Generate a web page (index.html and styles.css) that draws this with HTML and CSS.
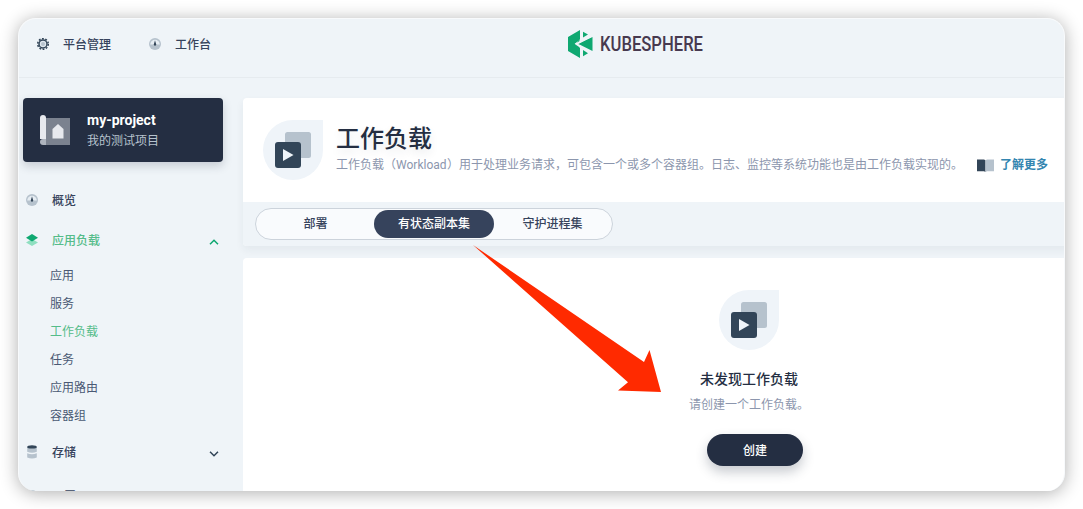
FILE: index.html
```html
<!DOCTYPE html>
<html lang="zh-CN">
<head>
<meta charset="utf-8">
<title>KubeSphere</title>
<link rel="stylesheet" href="styles.css">
</head>
<body>
<svg class="defs" width="0" height="0">
  <symbol id="gauge" viewBox="0 0 12 12"><circle cx="6" cy="6" r="6" fill="#b6c2cd"/><path d="M1.2 6.6a4.8 4.8 0 0 1 9.6 0z" fill="#e6edf3"/><path d="M6 2.2 7.3 6.8 6 8 4.7 6.8z" fill="#324558"/></symbol>
  <symbol id="workload" viewBox="0 0 60 60"><path d="M30 0h30v30a30 30 0 1 1-30-30z" fill="#eff4f9"/><rect x="22" y="12" width="26" height="26" rx="2.5" fill="#b6c2cd"/><rect x="12" y="22" width="26" height="26" rx="3" fill="#324558"/><path d="M20 29v12l10.500-6z" fill="#eff4f9"/></symbol>
</svg>
<div class="window">
  <header class="topbar">
    <nav class="topnav">
      <a class="toplink"><svg class="ic12" viewBox="0 0 12 12"><circle cx="6" cy="6" r="5.300" fill="none" stroke="#324558" stroke-width="1.500" stroke-dasharray="1.850 1.480"/><circle cx="6" cy="6" r="4" fill="#dfe7ee" stroke="#324558" stroke-width="1.500"/><circle cx="6" cy="6" r="2" fill="#b6c2cd"/></svg><span>平台管理</span></a>
      <a class="toplink"><svg class="ic12"><use href="#gauge"/></svg><span>工作台</span></a>
    </nav>
    <svg class="logo" viewBox="0 0 136 28">
      <path d="M12 0v9L7 13.800l5 4.200V28L0 21V7z" fill="#0fa871"/>
      <path d="M15 1.700v5.900L20 4.500zM24.500 7v14L10 13.800z" fill="#0fa871"/>
      <path d="M15 20v6.300l5-3z" fill="#0fa871"/>
      <path d="M11.500 8.500 8 13.800l3.500 5" fill="#0fa871"/>
      <path d="M25 5.200 8.500 13.800 15.500 19" fill="none" stroke="#eff4f8" stroke-width="2"/>
      <text x="32" y="21" textLength="103" lengthAdjust="spacingAndGlyphs">KUBESPHERE</text>
    </svg>
  </header>
  <div class="body">
    <aside class="side">
      <div class="project">
        <svg class="project-icon" viewBox="0 0 32 32"><path d="M4 4h27v27H4z" fill="#7b828f"/><path d="M1 4a3 3 0 0 1 6 0v21H1z" fill="#e7e9ee"/><path d="M7 25H4a3 3 0 0 0 0 6h3z" fill="#aeb4be"/><path d="M13.500 24.500V15L19 10l5.500 5v9.500z" fill="#e7e9ee"/></svg>
        <div><div class="project-name">my-project</div><div class="project-desc">我的测试项目</div></div>
      </div>
      <nav class="menu">
        <a class="item"><svg class="ic12"><use href="#gauge"/></svg><span>概览</span></a>
        <a class="item active"><svg class="ic12" viewBox="0 0 12 12"><path d="M0 8.500 6 5l6 3.500L6 12z" fill="#8fdfc0"/><path d="M0 3.700 6 0l6 3.700-6 3.700z" fill="#0fa871"/></svg><span>应用负载</span><svg class="chev" viewBox="0 0 10 6"><path d="M1 5.200 5 1.200l4 4" stroke="#0fa871"/></svg></a>
        <div class="submenu">
          <a>应用</a><a>服务</a><a class="active">工作负载</a><a>任务</a><a>应用路由</a><a>容器组</a>
        </div>
        <a class="item"><svg class="ic12 disk" viewBox="0 0 12 14"><path d="M1.200 2h9.600v4.800Q6 8.600 1.200 6.800z" fill="#b6c2cd"/><path d="M1.200 8.300q4.800 1.800 9.600 0v4.200q-4.800 2-9.600 0z" fill="#b6c2cd"/><ellipse cx="6" cy="1.900" rx="4.800" ry="1.700" fill="#324558"/></svg><span>存储</span><svg class="chev" viewBox="0 0 10 6"><path d="m1 .8 4 4 4-4" stroke="#324558"/></svg></a>
        <a class="item last"><svg class="ic12" viewBox="0 0 12 12"><circle cx="6" cy="6" r="6" fill="#b6c2cd"/></svg><span>配置</span></a>
      </nav>
    </aside>
    <main class="main">
      <section class="banner">
        <div class="intro">
          <svg class="ic60"><use href="#workload"/></svg>
          <div>
            <h1>工作负载</h1>
            <p>工作负载（<span class="latin">Workload</span>）用于处理业务请求，可包含一个或多个容器组。日志、监控等系统功能也是由工作负载实现的。<a class="more"><svg class="book" viewBox="0 0 17 13"><path d="M0 .5h7l1.500.7V13L7 12.200H0z" fill="#324558"/><path d="M17 .5h-7l-1.500.7V13l1.500-.8h7z" fill="#b6c2cd"/></svg>了解更多</a></p>
          </div>
        </div>
        <div class="tabbar"><div class="tabs"><span>部署</span><span class="on">有状态副本集</span><span>守护进程集</span></div></div>
      </section>
      <section class="empty">
        <svg class="ic60"><use href="#workload"/></svg>
        <h2>未发现工作负载</h2>
        <p>请创建一个工作负载。</p>
        <button class="create">创建</button>
      </section>
    </main>
  </div>
</div>
<svg class="arrow" viewBox="0 0 190 149"><path d="M0 0 171 117l5.500-12L188 147l-43-1.500 10-8.200z" fill="#ff2a00"/></svg>
</body>
</html>
```
FILE: styles.css
```css
* { box-sizing: border-box; }
body {
  margin: 0; padding: 18px; height: 509px; overflow: hidden; background: #fff;
  font: 12px/20px Roboto, "Noto Sans CJK SC", sans-serif; color: #36435c;
}
h1, h2, p { margin: 0; }
svg { display: block; flex: none; }
.defs { position: absolute; }
.window {
  width: 1047px; height: 473px; border-radius: 18px; overflow: hidden;
  background: #eff4f8; box-shadow: 0 2px 18px rgba(0, 0, 0, .32);
  border: 1px solid #f8fafc; border-bottom: 0;
}
.topbar { display: flex; height: 59px; border-bottom: 1px solid #e6ebef; }
.topnav { display: flex; gap: 38px; width: 549px; padding: 15px 0 0 18px; }
.toplink { display: flex; align-items: center; gap: 14px; height: 20px; font-weight: 500; }
.toplink span { padding-top: 2px; }
.ic12 { width: 12px; height: 12px; }
.logo { width: 136px; height: 28px; margin-top: 11px; }
.logo text { font: 500 20px Roboto, sans-serif; fill: #47394f; }
.body { display: flex; padding-top: 20px; }
.side { flex: none; width: 224px; padding-left: 4px; }
.project {
  display: flex; align-items: center; gap: 15px; width: 200px; height: 64px; padding-left: 16px;
  border-radius: 4px; background: #242e42; box-shadow: 0 4px 10px rgba(36, 46, 66, .2); color: #fff;
}
.project-icon { width: 32px; height: 32px; margin-right: 1px; }
.project-name { font-size: 14px; font-weight: 700; }
.project-desc { color: #b6c2cd; padding-top: 1px; margin-bottom: -1px; }
.menu { padding-top: 18px; }
.item { display: flex; align-items: center; height: 40px; padding: 0 4px 0 3px; font-weight: 500; width: 200px; }
.item span { margin-left: 14px; flex: 1; padding-top: 2px; }
.item .chev { margin-top: 4px; }
.disk { height: 14px; }
.last { margin-top: 4px; }
.chev { width: 10px; height: 6px; }
.chev path { fill: none; stroke-width: 1.5; }
.submenu { display: flex; flex-direction: column; padding: 2px 0 2px 27px; color: #4a5974; }
.submenu a { height: 28px; line-height: 28px; }
.menu .active { color: #55bc8a; }
.main { width: 1012px; flex: none; }
.banner { border-radius: 4px; overflow: hidden; box-shadow: 0 4px 8px rgba(36, 46, 66, .06); background: #fff; }
.intro { display: flex; gap: 13px; height: 104px; padding: 22px 0 0 20px; }
.ic60 { width: 60px; height: 60px; }
h1 { margin-top: 3px; font-size: 24px; line-height: 32px; font-weight: 500; color: #242e42; text-shadow: 0 4px 8px rgba(36, 46, 66, .1); }
p { color: #8c96ad; }
.intro p { display: flex; white-space: nowrap; }
.latin { width: 51px; font-size: 12px; }
.more { display: flex; align-items: center; gap: 6px; margin-left: 14px; color: #3385b0; font-weight: 700; }
.book { width: 17px; height: 13px; }
.tabbar { height: 44px; padding: 6px 12px; background: #eff4f8; }
.tabs { display: flex; width: 358px; height: 32px; padding: 1px; border: 1px solid #ccd3db; border-radius: 16px; background: #f9fbfd; }
.tabs span { flex: 1; padding-top: 1px; line-height: 27px; text-align: center; font-weight: 500; border-radius: 14px; }
.tabs .on { flex: 0 0 120px; background: #36435c; color: #fff; }
.empty { display: flex; flex-direction: column; align-items: center; height: 260px; margin-top: 12px; padding-top: 32px; background: #fff; border-radius: 4px; }
h2 { margin-top: 19px; font-size: 14px; line-height: 20px; font-weight: 500; color: #242e42; }
.empty p { margin-top: 6px; }
.create {
  width: 96px; height: 32px; margin: 19px 0 0 12px; padding: 0 0 2px; border: 0; border-radius: 16px; background: #242e42;
  color: #fff; font: 500 12px Roboto, "Noto Sans CJK SC", sans-serif; box-shadow: 0 6px 12px rgba(36, 46, 66, .25);
}
.arrow { position: absolute; left: 473px; top: 245px; width: 190px; height: 149px; }
```
